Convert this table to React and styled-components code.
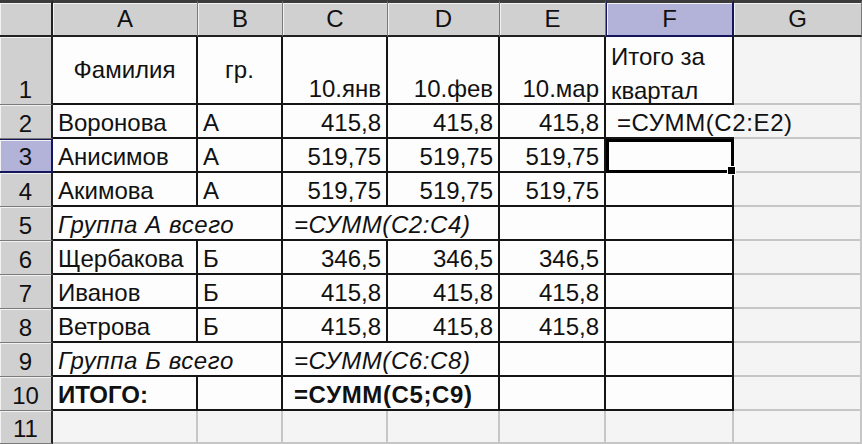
import React from "react";
import styled, { createGlobalStyle, css } from "styled-components";

const GlobalStyle = createGlobalStyle`
  body {
    margin: 0;
    background: #f4f4f4;
  }
  #root {
    width: 862px;
    height: 444px;
    overflow: hidden;
  }
`;

const Sheet = styled.div`
  display: grid;
  grid-template-columns: 53px 145px 85px 105px 112px 106px 128px 1fr;
  grid-template-rows: 37px 68px repeat(9, 34px) 1fr;
  width: 862px;
  height: 444px;
  font-family: "Liberation Sans", Arial, sans-serif;
  font-size: 24px;
  color: #111;
  background: #f4f4f4;
`;

const headerBase = css`
  box-sizing: border-box;
  display: flex;
  justify-content: center;
  line-height: 28px;
  background: ${({ $active }) => ($active ? "#b3b3d9" : "#d0d0d0")};
  box-shadow: inset 1px 1px 0 #f2f2f2;
`;

const Corner = styled.div`
  ${headerBase};
  border-top: 3px solid #3b3b3b;
  border-right: 2px solid #222;
  border-bottom: 2px solid #222;
`;

const ColHead = styled.div`
  ${headerBase};
  align-items: center;
  border-top: 3px solid #3b3b3b;
  border-bottom: 2px solid ${({ $active }) => ($active ? "#15155a" : "#222")};
  border-right: ${({ $active }) =>
    $active ? "2px solid #15155a" : "1px solid #7a7a7a"};
  ${({ $active }) => $active && "border-left: 1px solid #15155a;"}
`;

const RowHead = styled.div`
  ${headerBase};
  align-items: flex-end;
  border-right: 2px solid ${({ $active }) => ($active ? "#15155a" : "#222")};
  border-bottom: ${({ $active }) =>
    $active ? "2px solid #15155a" : "1px solid #7a7a7a"};
  ${({ $active }) => $active && "border-top: 1px solid #15155a;"}
`;

const lines = {
  bold: "2px solid #151515",
  thin: "2px solid #c6c6c6",
  none: "none",
};

const Cell = styled.div`
  box-sizing: border-box;
  display: flex;
  align-items: ${({ $valign }) => ($valign === "center" ? "center" : "flex-end")};
  justify-content: ${({ $align }) =>
    $align === "right" ? "flex-end" : $align === "center" ? "center" : "flex-start"};
  padding: 0 5px 0 ${({ $indent }) => ($indent ? "11px" : "5px")};
  line-height: ${({ $wrap }) => ($wrap ? "34px" : "28px")};
  white-space: ${({ $wrap }) => ($wrap ? "normal" : "nowrap")};
  font-style: ${({ $italic }) => ($italic ? "italic" : "normal")};
  font-weight: ${({ $bold }) => ($bold ? "bold" : "normal")};
  letter-spacing: ${({ $indent, $italic }) => ($indent || $italic ? "0.6px" : "0")};
  background: ${({ $plain }) => ($plain ? "#f4f4f4" : "#fdfdfd")};
  border-right: ${({ $right }) => lines[$right]};
  border-bottom: ${({ $bottom }) => lines[$bottom]};
  overflow: visible;
  ${({ $over }) => $over && "z-index: 1;"}
  ${({ $selected }) =>
    $selected &&
    css`
      position: relative;
      z-index: 2;
      border: 3px solid #000;
      &::after {
        content: "";
        position: absolute;
        right: -5px;
        bottom: -5px;
        width: 7px;
        height: 7px;
        background: #000;
        border: 1px solid #fff;
      }
    `}
`;

const Text = styled.span`
  display: block;
  margin-bottom: ${({ $wrap }) => ($wrap ? "-5px" : "0")};
`;

const columns = ["A", "B", "C", "D", "E", "F", "G"];

const rows = [
  [
    { t: "Фамилия", align: "center", valign: "center" },
    { t: "гр.", align: "center", valign: "center" },
    { t: "10.янв", align: "right" },
    { t: "10.фев", align: "right" },
    { t: "10.мар", align: "right" },
    { t: "Итого за квартал", wrap: true },
  ],
  [
    { t: "Воронова" },
    { t: "А" },
    { t: "415,8", align: "right" },
    { t: "415,8", align: "right" },
    { t: "415,8", align: "right" },
    { t: "=СУММ(C2:E2)", indent: true, over: true },
  ],
  [
    { t: "Анисимов" },
    { t: "А" },
    { t: "519,75", align: "right" },
    { t: "519,75", align: "right" },
    { t: "519,75", align: "right" },
    { t: "", selected: true },
  ],
  [
    { t: "Акимова" },
    { t: "А" },
    { t: "519,75", align: "right" },
    { t: "519,75", align: "right" },
    { t: "519,75", align: "right" },
    {},
  ],
  [
    { t: "Группа А всего", italic: true, over: true },
    {},
    { t: "=СУММ(C2:C4)", italic: true, indent: true, over: true },
    {},
    {},
    {},
  ],
  [
    { t: "Щербакова" },
    { t: "Б" },
    { t: "346,5", align: "right" },
    { t: "346,5", align: "right" },
    { t: "346,5", align: "right" },
    {},
  ],
  [
    { t: "Иванов" },
    { t: "Б" },
    { t: "415,8", align: "right" },
    { t: "415,8", align: "right" },
    { t: "415,8", align: "right" },
    {},
  ],
  [
    { t: "Ветрова" },
    { t: "Б" },
    { t: "415,8", align: "right" },
    { t: "415,8", align: "right" },
    { t: "415,8", align: "right" },
    {},
  ],
  [
    { t: "Группа Б всего", italic: true, over: true },
    {},
    { t: "=СУММ(C6:C8)", italic: true, indent: true, over: true },
    {},
    {},
    {},
  ],
  [
    { t: "ИТОГО:", bold: true },
    {},
    { t: "=СУММ(C5;C9)", bold: true, indent: true, over: true },
    {},
    {},
    {},
  ],
];

const ACTIVE_ROW = 3;
const ACTIVE_COL = "F";

export default function App() {
  return (
    <>
      <GlobalStyle />
      <Sheet>
        <Corner />
        {columns.map((c) => (
          <ColHead key={c} $active={c === ACTIVE_COL}>
            {c}
          </ColHead>
        ))}

        {rows.map((cells, i) => (
          <React.Fragment key={i}>
            <RowHead $active={i + 1 === ACTIVE_ROW}>{i + 1}</RowHead>
            {cells.map((cell, j) => (
              <Cell
                key={j}
                $align={cell.align}
                $valign={cell.valign}
                $wrap={cell.wrap}
                $italic={cell.italic}
                $bold={cell.bold}
                $indent={cell.indent}
                $over={cell.over}
                $selected={cell.selected}
                $right={cell.over ? "none" : "bold"}
                $bottom="bold"
              >
                {cell.t && <Text $wrap={cell.wrap}>{cell.t}</Text>}
              </Cell>
            ))}
            <Cell $plain $right="thin" $bottom="thin" />
          </React.Fragment>
        ))}

        <RowHead>11</RowHead>
        {columns.map((c) => (
          <Cell key={c} $plain $right="thin" $bottom="thin" />
        ))}
      </Sheet>
    </>
  );
}
